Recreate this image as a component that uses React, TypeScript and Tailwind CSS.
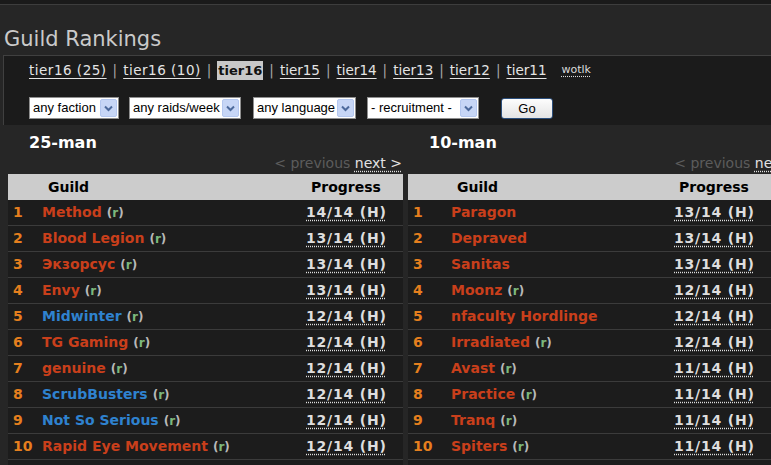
import React from "react";

type Row = { rank: number; name: string; side: "h" | "a"; r: boolean; prog: string };

const man25: Row[] = [
  { rank: 1, name: "Method", side: "h", r: true, prog: "14/14 (H)" },
  { rank: 2, name: "Blood Legion", side: "h", r: true, prog: "13/14 (H)" },
  { rank: 3, name: "Экзорсус", side: "h", r: true, prog: "13/14 (H)" },
  { rank: 4, name: "Envy", side: "h", r: true, prog: "13/14 (H)" },
  { rank: 5, name: "Midwinter", side: "a", r: true, prog: "12/14 (H)" },
  { rank: 6, name: "TG Gaming", side: "h", r: true, prog: "12/14 (H)" },
  { rank: 7, name: "genuine", side: "h", r: true, prog: "12/14 (H)" },
  { rank: 8, name: "ScrubBusters", side: "a", r: true, prog: "12/14 (H)" },
  { rank: 9, name: "Not So Serious", side: "a", r: true, prog: "12/14 (H)" },
  { rank: 10, name: "Rapid Eye Movement", side: "h", r: true, prog: "12/14 (H)" },
];

const man10: Row[] = [
  { rank: 1, name: "Paragon", side: "h", r: false, prog: "13/14 (H)" },
  { rank: 2, name: "Depraved", side: "h", r: false, prog: "13/14 (H)" },
  { rank: 3, name: "Sanitas", side: "h", r: false, prog: "13/14 (H)" },
  { rank: 4, name: "Moonz", side: "h", r: true, prog: "12/14 (H)" },
  { rank: 5, name: "nfaculty Hordlinge", side: "h", r: false, prog: "12/14 (H)" },
  { rank: 6, name: "Irradiated", side: "h", r: true, prog: "12/14 (H)" },
  { rank: 7, name: "Avast", side: "h", r: true, prog: "11/14 (H)" },
  { rank: 8, name: "Practice", side: "h", r: true, prog: "11/14 (H)" },
  { rank: 9, name: "Tranq", side: "h", r: true, prog: "11/14 (H)" },
  { rank: 10, name: "Spiters", side: "h", r: true, prog: "11/14 (H)" },
];

const tiers = ["tier16 (25)", "tier16 (10)", "tier16", "tier15", "tier14", "tier13", "tier12", "tier11"];

function Select({ label, w }: { label: string; w: string }) {
  return (
    <div className={`${w} h-[22px] flex items-center justify-between bg-white border border-[#8f8f8f] pl-[3px] pr-[1px]`}>
      <span className="font-['Liberation_Sans',sans-serif] text-[13px] text-black whitespace-nowrap">{label}</span>
      <span className="w-[17px] h-[18px] flex items-center justify-center bg-[#c7d6f6] border border-[#b4c7ef] rounded-[2px]">
        <svg width="9" height="7" viewBox="0 0 9 7">
          <path d="M1 1.5 L4.5 5 L8 1.5" fill="none" stroke="#4d6a9c" strokeWidth="2" />
        </svg>
      </span>
    </div>
  );
}

function Rankings({
  title,
  rows,
  rankW,
  guildW,
}: {
  title: string;
  rows: Row[];
  rankW: string;
  guildW: string;
}) {
  return (
    <div className="w-[395px] shrink-0">
      <div className="mt-[8px] pl-[21px] h-[20px] leading-[20px] text-[16px] font-bold text-white">{title}</div>
      <div className="h-[20px] leading-[20px] text-[14px] text-right pr-[1px] whitespace-nowrap">
        <span className="text-[#5c5c5c]">&lt; previous </span>
        <span className="text-[#e2e2e2] underline decoration-dotted underline-offset-[3px]">next &gt;</span>
      </div>
      <div className="mt-[1px] bg-[#1c1c1c]">
        <div className="h-[26px] bg-[#cccccc] flex items-center text-[14px] font-bold text-black">
          <div className={`${rankW} shrink-0`} />
          <div className={`${guildW} shrink-0 pl-[6px]`}>Guild</div>
          <div className="pl-[5px]">Progress</div>
        </div>
        {rows.map((row) => (
          <div key={row.rank} className="h-[26px] border-b border-[#3b3b3b] flex items-center text-[14px] font-bold whitespace-nowrap">
            <div className={`${rankW} shrink-0 pl-[5px] text-[#e57f1e]`}>{row.rank}</div>
            <div className={`${guildW} shrink-0`}>
              <span className={row.side === "h" ? "text-[#c93f1b]" : "text-[#2f82cf]"}>{row.name}</span>
              {row.r && (
                <span className="ml-[5px] text-[12px] text-[#b8b8b8]">
                  (<span className="text-[#7cb87c]">r</span>)
                </span>
              )}
            </div>
            <div className="text-[#dedede] tracking-[0.8px] underline decoration-dotted underline-offset-[3px]">{row.prog}</div>
          </div>
        ))}
        <div className="h-[10px]" />
      </div>
    </div>
  );
}

export default function App() {
  return (
    <div className="w-[771px] h-[465px] overflow-hidden bg-[#262626] font-['DejaVu_Sans',sans-serif]">
      <div className="h-[5px] bg-[#1a1a1a] border-b border-[#3d3d3d]" />
      <h1 className="mt-[19px] ml-[4px] h-[30px] leading-[30px] text-[21px] text-[#cacaca] whitespace-nowrap">Guild Rankings</h1>
      <div className="mt-[1px] ml-[3px] h-[70px] border-t border-l border-[#404040] bg-[#1b1b1b] pl-[25px]">
        <div className="pt-[4px] h-[24px] flex items-center text-[13.5px] text-[#e4e4e4] whitespace-nowrap">
          {tiers.map((t, i) => (
            <React.Fragment key={t}>
              {i > 0 && <span className="text-[#a8a8a8] px-[6px]">|</span>}
              {t === "tier16" ? (
                <span className="bg-[#c8c8c8] text-[#111] text-[13px] font-bold px-[1px] leading-[19px]">{t}</span>
              ) : (
                <span className={`underline underline-offset-[3px] ${t.includes("(") ? "tracking-[0.5px]" : ""}`}>{t}</span>
              )}
            </React.Fragment>
          ))}
          <span className="ml-[15px] text-[11px] text-[#dcdcdc] underline decoration-dotted underline-offset-[3px]">wotlk</span>
        </div>
        <div className="mt-[17px] flex items-center">
          <Select label="any faction" w="w-[90px]" />
          <div className="w-[10px]" />
          <Select label="any raids/week" w="w-[112px]" />
          <div className="w-[12px]" />
          <Select label="any language" w="w-[103px]" />
          <div className="w-[11px]" />
          <Select label="- recruitment -" w="w-[112px]" />
          <button className="ml-[22px] w-[52px] h-[21px] rounded-[3px] border border-[#2c4f7c] bg-gradient-to-b from-[#fdfdfd] to-[#e4e4e4] font-['Liberation_Sans',sans-serif] text-[13px] text-black leading-none">
            Go
          </button>
        </div>
      </div>
      <div className="flex pl-[8px] gap-[5px]">
        <Rankings title="25-man" rows={man25} rankW="w-[34px]" guildW="w-[264px]" />
        <Rankings title="10-man" rows={man10} rankW="w-[43px]" guildW="w-[223px]" />
      </div>
    </div>
  );
}
